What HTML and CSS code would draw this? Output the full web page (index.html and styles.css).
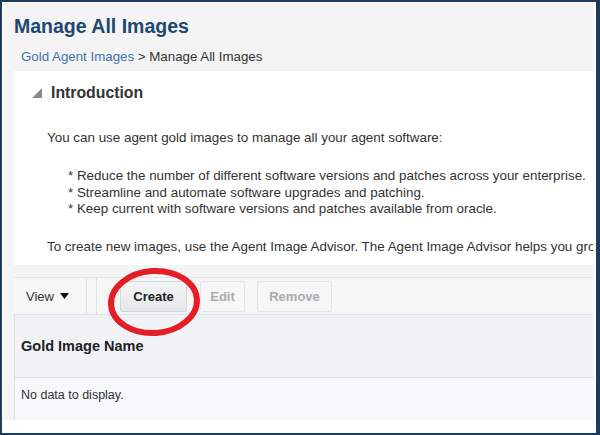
FILE: index.html
```html
<!DOCTYPE html>
<html>
<head>
<meta charset="utf-8">
<link rel="stylesheet" href="styles.css">
</head>
<body>
<div class="frame">
  <div class="page">
    <div class="header">
      <h1 class="title">Manage All Images</h1>
      <div class="crumbs"><a class="crumb-link">Gold Agent Images</a> &gt; Manage All Images</div>
    </div>
    <section class="intro">
      <div class="intro-head">
        <svg class="disclose" width="10" height="10" viewBox="0 0 10 10"><path d="M10 0 L10 10 L0 10 Z" fill="#8a8a8a"/></svg>
        <span>Introduction</span>
      </div>
      <p class="lead">You can use agent gold images to manage all your agent software:</p>
      <div class="bullets">
        <div>* Reduce the number of different software versions and patches across your enterprise.</div>
        <div>* Streamline and automate software upgrades and patching.</div>
        <div>* Keep current with software versions and patches available from oracle.</div>
      </div>
      <p class="tail">To create new images, use the Agent Image Advisor. The Agent Image Advisor helps you grou</p>
    </section>
    <div class="toolbar">
      <div class="view">View <svg width="9" height="6" viewBox="0 0 9 6"><path d="M0 0 L9 0 L4.5 6 Z" fill="#111"/></svg></div>
      <div class="sep"></div>
      <div class="sep"></div>
      <div class="btns">
        <button class="btn btn-create">Create</button>
        <button class="btn btn-edit disabled">Edit</button>
        <button class="btn btn-remove disabled">Remove</button>
      </div>
    </div>
    <div class="table">
      <div class="thead">Gold Image Name</div>
      <div class="tbody">No data to display.</div>
    </div>
  </div>
  <svg class="circle" width="110" height="90" viewBox="0 0 110 90">
    <ellipse cx="55" cy="45" rx="43" ry="31" fill="none" stroke="#e31e26" stroke-width="6" transform="rotate(-4 55 45)"/>
  </svg>
</div>
</body>
</html>
```

FILE: styles.css
```css
* { box-sizing: border-box; }
html, body { margin: 0; padding: 0; }
body {
  font-family: "Liberation Sans", Arial, sans-serif;
  color: #333;
  background: #fff;
}
.frame {
  position: relative;
  width: 600px;
  height: 435px;
  border: 2px solid #1e3a5c;
  border-right-width: 4px;
  background: #fff;
  padding: 1px 3px 13px 1px;
  overflow: hidden;
}
.page {
  height: 100%;
  background: #f4f4f4;
  padding-left: 11px;
  display: flex;
  flex-direction: column;
}
.header {
  height: 68px;
  padding-top: 11px;
  flex: none;
}
.title {
  margin: 0;
  font-size: 19.5px;
  line-height: 24px;
  font-weight: bold;
  color: #1f4870;
}
.crumbs {
  margin-top: 11px;
  padding-left: 7px;
  font-size: 13.3px;
  line-height: 16px;
  color: #333;
}
.crumb-link { color: #3f72ae; }
.intro {
  background: #fff;
  height: 194px;
  flex: none;
  padding: 13px 0 0 18px;
  overflow: hidden;
}
.intro-head {
  display: flex;
  align-items: center;
  gap: 9px;
  font-size: 15.8px;
  line-height: 18px;
  font-weight: bold;
  color: #333;
}
.disclose { flex: none; }
.lead {
  margin: 28px 0 0 15px;
  font-size: 13.4px;
  line-height: 16px;
}
.bullets {
  margin: 22px 0 0 36px;
  font-size: 13.4px;
  line-height: 16.5px;
  white-space: nowrap;
}
.tail {
  margin: 21px 0 0 15px;
  font-size: 13.4px;
  line-height: 16px;
  white-space: nowrap;
}
.toolbar {
  margin-top: 12px;
  height: 38px;
  flex: none;
  border-top: 1px solid #e1e4e8;
  border-bottom: 1px solid #dfe3ea;
  background: #f6f6f6;
  display: flex;
  align-items: stretch;
}
.view {
  width: 72px;
  padding-left: 12px;
  display: flex;
  align-items: center;
  gap: 6px;
  font-size: 13px;
  color: #333;
}
.sep {
  width: 1px;
  background: #dde0e4;
  margin-right: 9px;
}
.btns {
  display: flex;
  align-items: center;
  padding-left: 14px;
}
.btn {
  height: 31px;
  padding: 0;
  text-align: center;
  font-family: "Liberation Sans", Arial, sans-serif;
  font-size: 13px;
  font-weight: bold;
  color: #222;
  background: linear-gradient(#f2f3f4, #e6e8ea);
  border: 1px solid #d3d6d9;
  border-radius: 2px;
}
.btn-create { width: 67px; }
.btn-edit { width: 45px; margin-left: 13px; }
.btn-remove { width: 75px; margin-left: 12px; }
.btn.disabled {
  color: #a9acb0;
  background: #f6f6f6;
  border-color: #e3e5e8;
}
.table {
  flex: 1;
  border-left: 1px solid #dde1e7;
  display: flex;
  flex-direction: column;
}
.thead {
  height: 63px;
  flex: none;
  background: #f0f2f6;
  border-bottom: 1px solid #d9dde3;
  padding-left: 6px;
  display: flex;
  align-items: center;
  font-size: 14.5px;
  font-weight: bold;
  color: #222;
}
.tbody {
  flex: 1;
  background: #f7f8fb;
  padding: 9px 0 0 6px;
  font-size: 12.5px;
  line-height: 16px;
  color: #333;
}
.circle {
  position: absolute;
  left: 97px;
  top: 255px;
}
```
